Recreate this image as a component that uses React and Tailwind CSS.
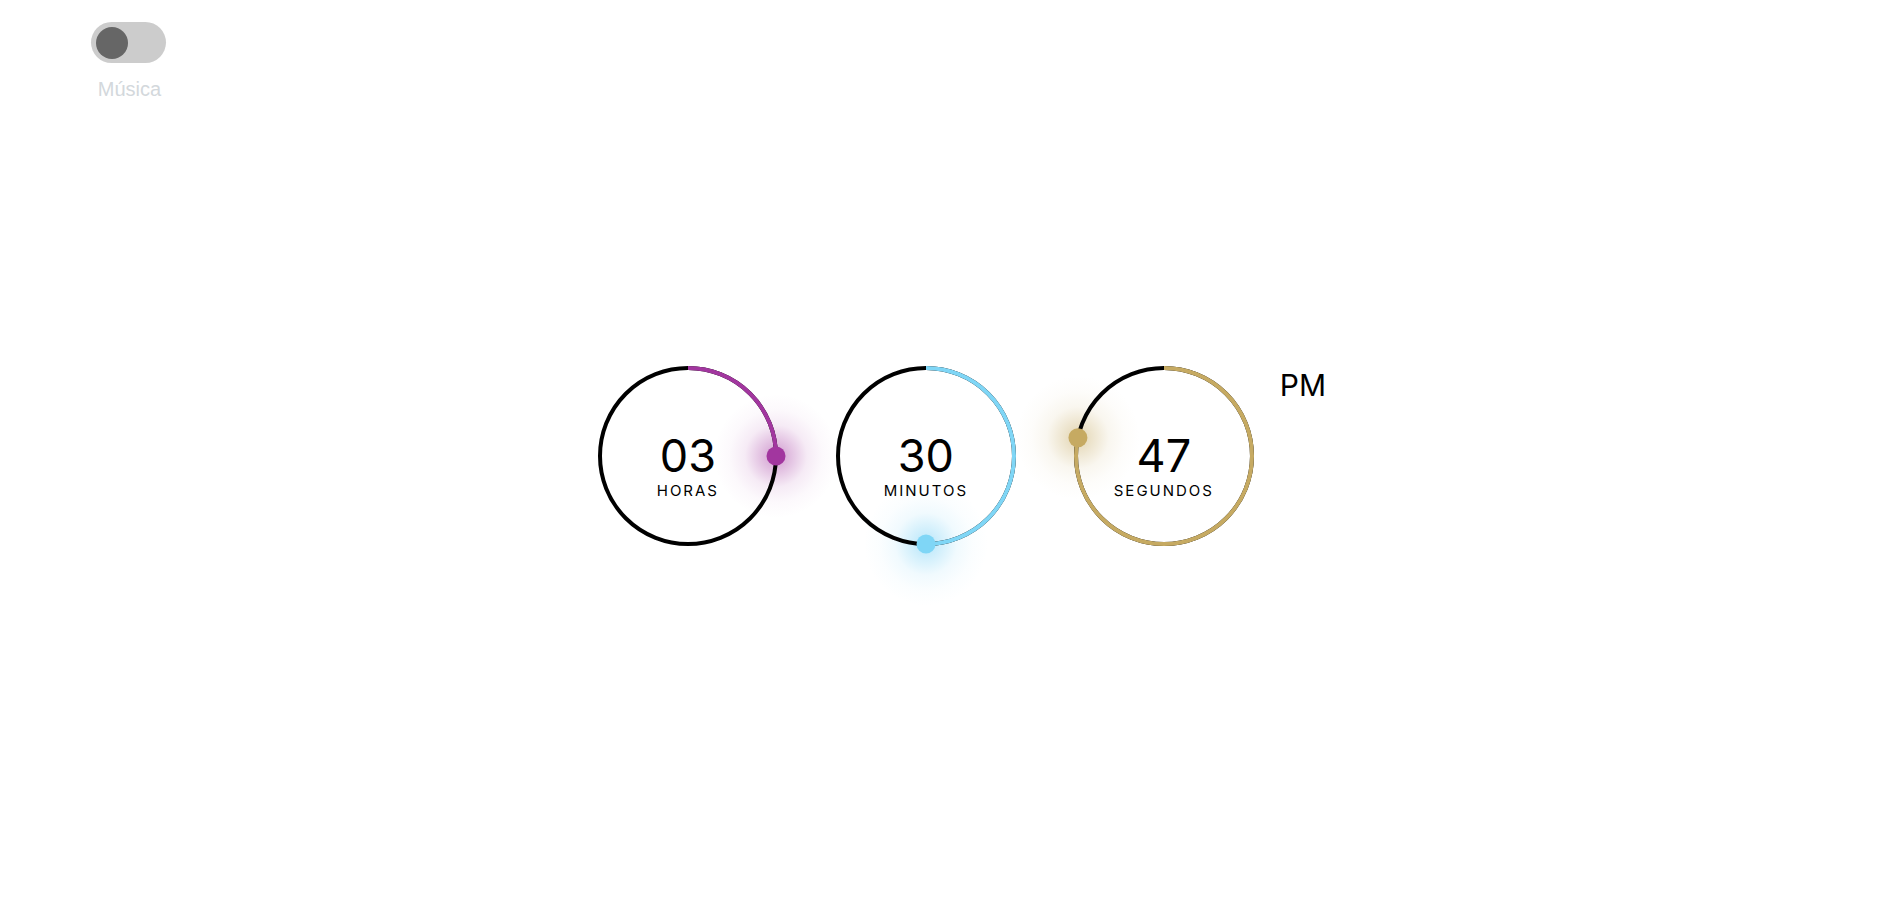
import React from "react";

const R = 88;
const C = 2 * Math.PI * R;

const dials = [
  { value: 3, max: 12, label: "HORAS", color: "#a2369f", glow: "rgb(162,54,159)" },
  { value: 30, max: 60, label: "MINUTOS", color: "#7fd6f6", glow: "rgb(110,205,245)" },
  { value: 47, max: 60, label: "SEGUNDOS", color: "#c6aa62", glow: "rgb(198,170,98)" },
];

const pad = (n) => String(n).padStart(2, "0");

const Dial = ({ value, max, label, color, glow, id }) => {
  const frac = value / max;
  const angle = frac * 2 * Math.PI;
  const dx = 90 + R * Math.sin(angle);
  const dy = 90 - R * Math.cos(angle);

  return (
    <div className="relative w-[180px] h-[180px] flex flex-col items-center justify-center pt-[19px]">
      {/* ring drawing */}
      <svg
        className="absolute inset-0 overflow-visible"
        width="180"
        height="180"
        viewBox="0 0 180 180"
      >
        <defs>
          <radialGradient id={`glow-${id}`}>
            <stop offset="0%" stopColor={glow} stopOpacity="0.5" />
            <stop offset="25%" stopColor={glow} stopOpacity="0.3" />
            <stop offset="50%" stopColor={glow} stopOpacity="0.1" />
            <stop offset="75%" stopColor={glow} stopOpacity="0.03" />
            <stop offset="100%" stopColor={glow} stopOpacity="0" />
          </radialGradient>
        </defs>
        <circle cx={dx} cy={dy} r="62" fill={`url(#glow-${id})`} />
        <circle cx="90" cy="90" r={R} fill="none" stroke="#000" strokeWidth="4" />
        <circle
          cx="90"
          cy="90"
          r={R}
          fill="none"
          stroke={color}
          strokeWidth="4"
          strokeDasharray={`${C * frac} ${C}`}
          transform="rotate(-90 90 90)"
        />
        <circle cx={dx} cy={dy} r="9.5" fill={color} />
      </svg>

      <span className="relative text-[45px] leading-none text-black">{pad(value)}</span>
      <span className="relative mt-[5px] text-[15px] leading-none tracking-[2px] text-black">
        {label}
      </span>
    </div>
  );
};

export default function App() {
  return (
    <div className="h-screen flex flex-col bg-white overflow-hidden font-['Inter',sans-serif]">
      {/* music toggle */}
      <div className="pl-[91px] pt-[22px]">
        <div className="w-fit flex flex-col items-center">
          <button className="w-[75px] h-[41px] rounded-full bg-[#cccccc] flex items-center px-[5px]">
            <span className="w-[32px] h-[32px] rounded-full bg-[#666666]" />
          </button>
          <span className="mt-[16px] ml-[2px] text-[20px] leading-none text-[#d3d8dc] font-['Liberation_Sans',sans-serif]">
            Música
          </span>
        </div>
      </div>

      {/* clock */}
      <div className="flex-1 flex items-center justify-center pl-[27px] pb-[95px]">
        <div className="flex items-start">
          <div className="flex gap-[58px]">
            {dials.map((d, i) => (
              <Dial key={d.label} id={i} {...d} />
            ))}
          </div>
          <span className="ml-[26px] mt-[4px] text-[30px] leading-none text-black">PM</span>
        </div>
      </div>
    </div>
  );
}
